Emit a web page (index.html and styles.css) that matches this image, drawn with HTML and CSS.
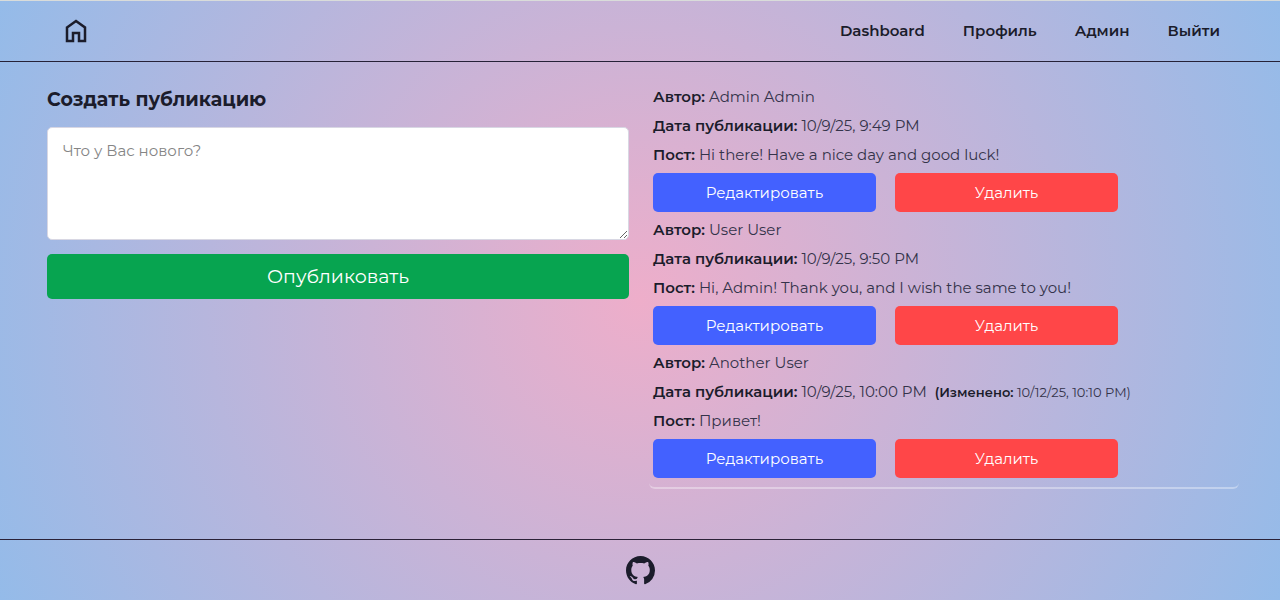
FILE: index.html
```html
<!DOCTYPE html>
<html lang="ru">
<head>
<meta charset="utf-8">
<meta name="viewport" content="width=device-width, initial-scale=1">
<title>Dashboard</title>
<link rel="stylesheet" href="styles.css">
</head>
<body>
<header class="header">
  <a class="home" href="#" aria-label="Home">
    <svg width="22" height="24" viewBox="0 0 22 24" fill="none" stroke="currentColor" stroke-width="2.500"><path d="M2 8.500 11 2l9 6.500V22h-6v-8H8v8H2z"/></svg>
  </a>
  <nav class="nav">
    <a href="#">Dashboard</a>
    <a href="#">Профиль</a>
    <a href="#">Админ</a>
    <a href="#">Выйти</a>
  </nav>
</header>
<main class="main">
  <form class="create">
    <h1 class="title"><label for="post">Создать публикацию</label></h1>
    <textarea class="field" id="post" placeholder="Что у Вас нового?"></textarea>
    <button class="btn publish" type="button">Опубликовать</button>
  </form>
  <section class="posts">
    <article class="post">
      <p><b>Автор:</b> Admin Admin</p>
      <p><b>Дата публикации:</b> 10/9/25, 9:49 PM</p>
      <p><b>Пост:</b> Hi there! Have a nice day and good luck!</p>
      <div class="actions"><button class="btn edit" type="button">Редактировать</button><button class="btn delete" type="button">Удалить</button></div>
    </article>
    <article class="post">
      <p><b>Автор:</b> User User</p>
      <p><b>Дата публикации:</b> 10/9/25, 9:50 PM</p>
      <p><b>Пост:</b> Hi, Admin! Thank you, and I wish the same to you!</p>
      <div class="actions"><button class="btn edit" type="button">Редактировать</button><button class="btn delete" type="button">Удалить</button></div>
    </article>
    <article class="post">
      <p><b>Автор:</b> Another User</p>
      <p><b>Дата публикации:</b> 10/9/25, 10:00 PM <small class="changed"><b>(Изменено:</b> 10/12/25, 10:10 PM)</small></p>
      <p><b>Пост:</b> Привет!</p>
      <div class="actions"><button class="btn edit" type="button">Редактировать</button><button class="btn delete" type="button">Удалить</button></div>
    </article>
  </section>
</main>
<footer class="footer">
  <a href="#" aria-label="GitHub">
    <svg width="29" height="29" viewBox="0 0 16 16" fill="currentColor"><path d="M8 0C3.580 0 0 3.580 0 8c0 3.540 2.290 6.530 5.470 7.590.4.070.55-.17.55-.38 0-.19-.01-.82-.01-1.490-2.010.37-2.530-.49-2.690-.94-.09-.23-.48-.94-.82-1.130-.28-.15-.68-.52-.01-.53.63-.01 1.080.58 1.230.82.72 1.210 1.870.87 2.330.66.070-.52.28-.87.51-1.070-1.780-.2-3.640-.89-3.640-3.950 0-.87.31-1.590.82-2.150-.08-.2-.36-1.020.08-2.120 0 0 .67-.21 2.200.82.64-.18 1.320-.27 2-.27s1.360.09 2 .27c1.530-1.040 2.200-.82 2.200-.82.44 1.100.16 1.920.08 2.120.51.56.82 1.270.82 2.150 0 3.070-1.870 3.750-3.650 3.950.29.25.54.73.54 1.480 0 1.070-.01 1.930-.01 2.200 0 .21.15.46.55.38A8.010 8.010 0 0 0 16 8c0-4.420-3.580-8-8-8z"/></svg>
  </a>
</footer>
</body>
</html>
```

FILE: styles.css
```css
* { box-sizing: border-box; }
body {
  margin: 0;
  min-height: 100vh;
  display: flex;
  flex-direction: column;
  border-top: 1px solid #d9dcda;
  background: radial-gradient(circle, #eeaeca 0%, #94bbe9 100%);
  color: #1b1c2b;
  font: 15px/29px Montserrat, Inter, "Noto Sans", sans-serif;
}
a { color: inherit; text-decoration: none; }
svg { display: block; }
.header {
  display: flex;
  align-items: center;
  justify-content: space-between;
  height: 61px;
  padding: 0 60px 0 65px;
  border-bottom: 1px solid #262238;
}
.nav { display: flex; gap: 38px; padding-bottom: 2px; font-weight: 600; }
.main {
  flex: 1;
  display: grid;
  grid-template-columns: 1fr 1fr;
  gap: 12px;
  align-items: start;
  padding: 20px 41px 50px 47px;
}
.create { display: flex; flex-direction: column; margin-right: 8px; }
.title { margin: 3px 0 13px; font-size: 19px; line-height: 29px; font-weight: 700; }
.field {
  height: 113px;
  padding: 8px 15px;
  border: 1px solid #d8d7e3;
  border-radius: 5px;
  background: #fff;
  color: inherit;
  font: inherit;
  resize: vertical;
}
.field::placeholder { color: #858585; }
.btn {
  border: 0;
  border-radius: 5px;
  padding: 0;
  color: #fff;
  font: inherit;
  cursor: pointer;
}
.publish { height: 45px; margin-top: 14px; background: #07a450; font-size: 19px; }
.posts {
  padding: 0 4px 6px;
  border-bottom: 2px solid rgba(255, 255, 255, 0.35);
  border-radius: 6px;
}
.post p { margin: 0; color: #34334a; }
.post b { font-weight: 600; color: #1b1c2b; }
.post .changed { margin-left: 4px; font-size: 13px; line-height: 1; }
.actions { display: flex; gap: 19px; padding: 4px 0 3px; }
.actions .btn { width: 223px; max-width: 48%; height: 39px; }
.edit { background: #4361ff; }
.delete { background: #ff4648; }
.footer {
  display: flex;
  align-items: center;
  justify-content: center;
  height: 61px;
  border-top: 1px solid #2b2238;
}
```
